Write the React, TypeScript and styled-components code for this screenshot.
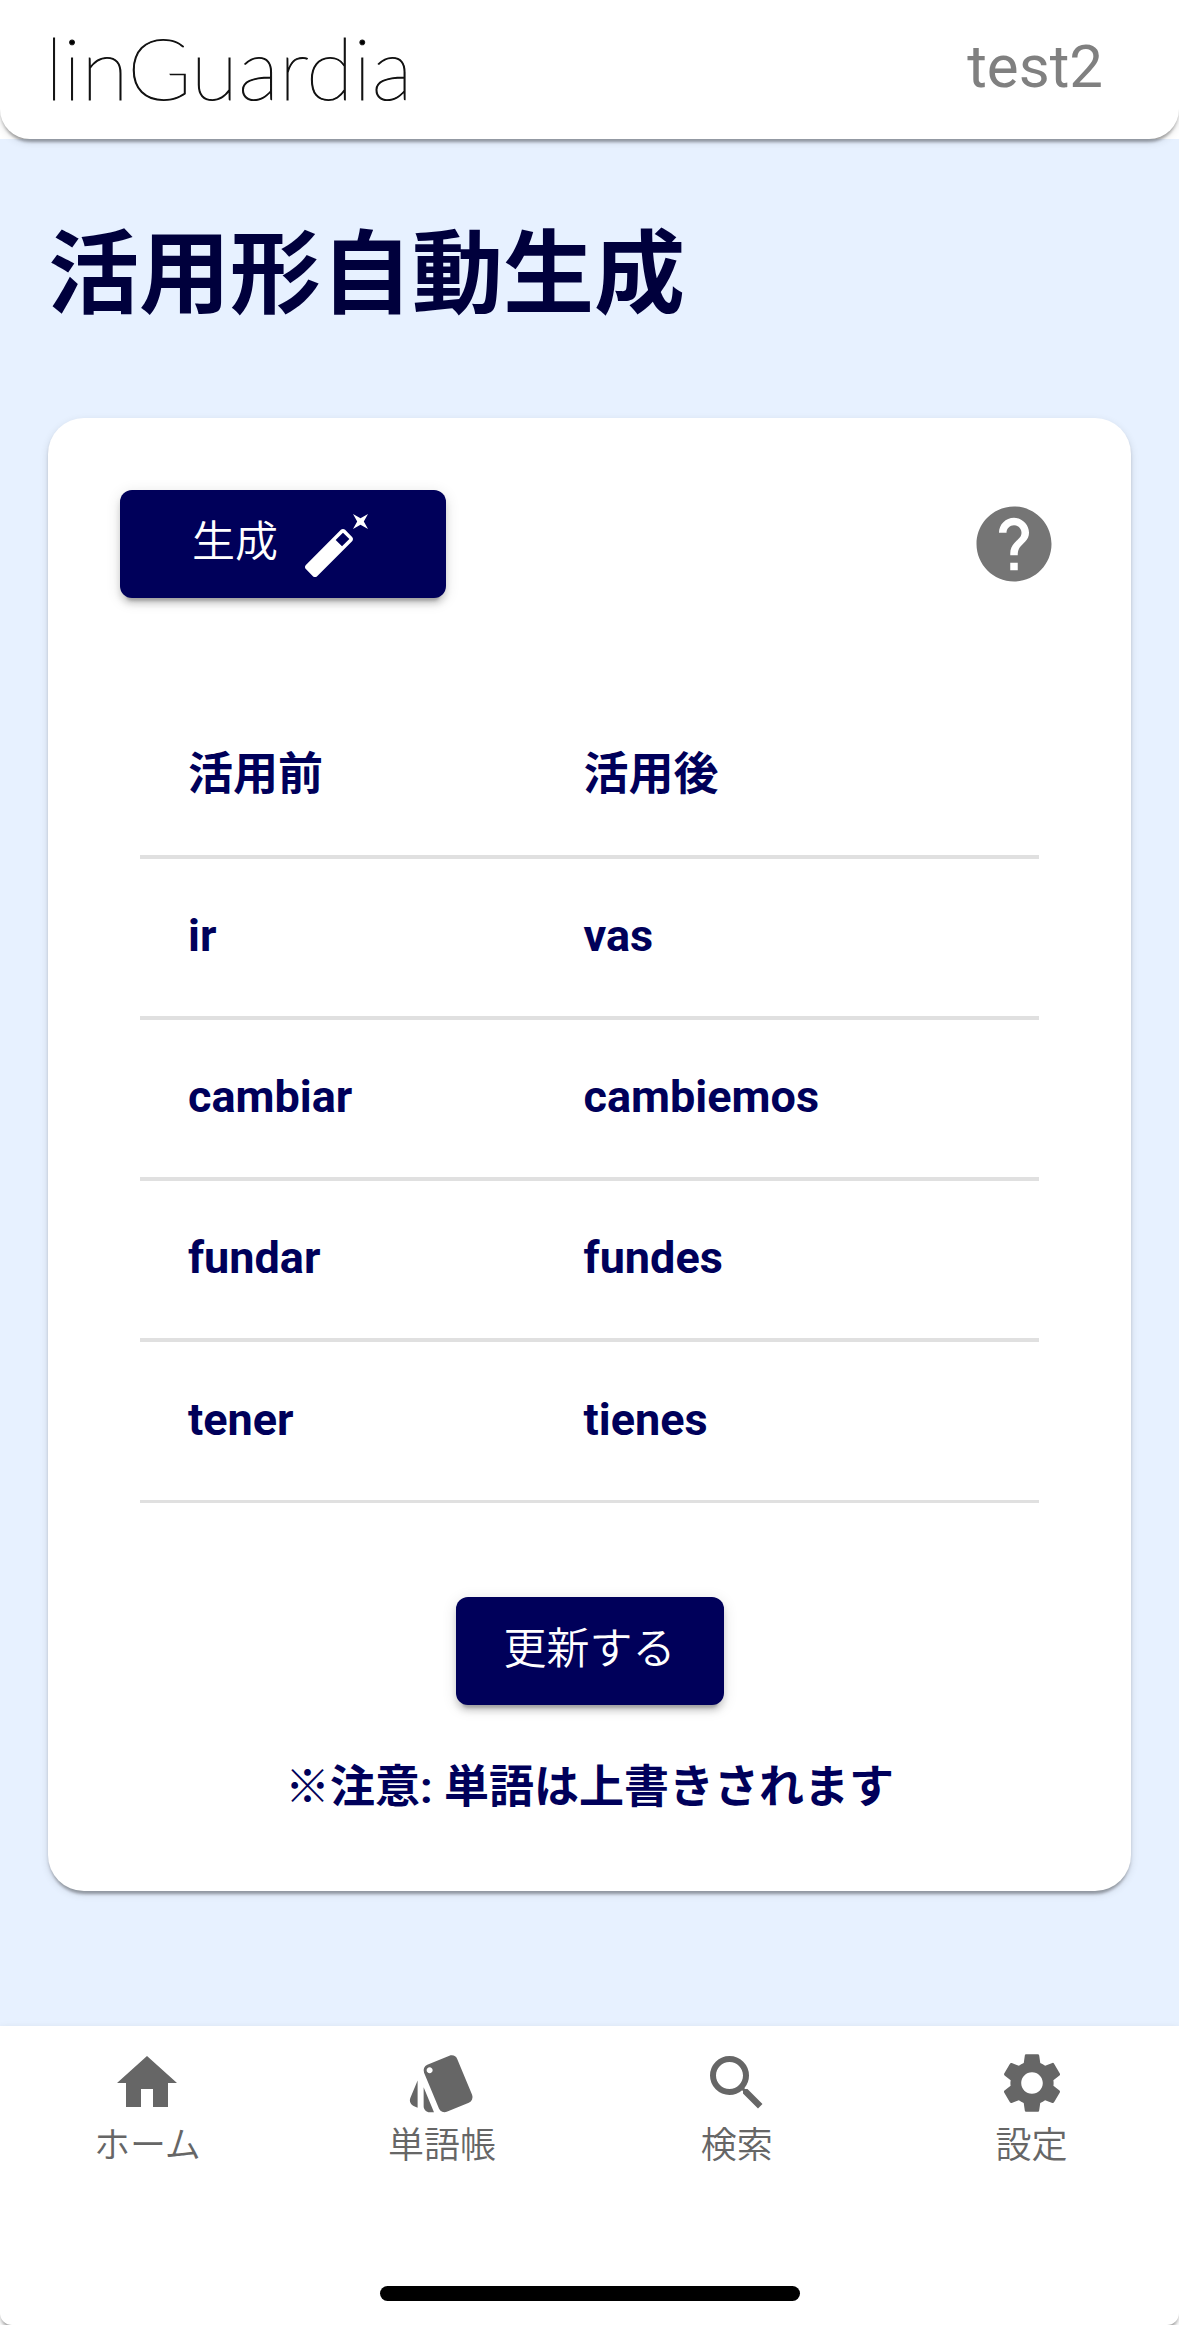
import React from "react";
import styled, { createGlobalStyle } from "styled-components";
import { MdHelp, MdHome, MdSearch, MdSettings, MdStyle } from "react-icons/md";
import type { IconType } from "react-icons";

const navy = "#00005a";

const GlobalStyle = createGlobalStyle`
  *, *::before, *::after { box-sizing: border-box; }
  body {
    margin: 0;
    background: #fff;
    color: ${navy};
    font-family: Roboto, "Noto Sans CJK JP", sans-serif;
  }
`;

const Page = styled.div`
  display: flex;
  flex-direction: column;
  min-height: 100vh;
`;

const Header = styled.header`
  position: relative;
  display: flex;
  align-items: center;
  justify-content: space-between;
  height: 139px;
  padding: 0 76px 6px 45px;
  background: #fff;
  border-radius: 0 0 30px 30px;
  box-shadow:
    0 6px 3px -3px rgba(0, 0, 0, 0.2),
    0 3px 3px 0 rgba(0, 0, 0, 0.14),
    0 3px 9px 0 rgba(0, 0, 0, 0.12);
`;

const Logo = styled.a`
  color: #000;
  font-family: Lato, sans-serif;
  font-size: 87px;
  font-weight: 200;
  line-height: 132px;
  text-decoration: none;
  -webkit-text-stroke: 1px #111;
`;

const UserName = styled.span`
  color: #808080;
  font-size: 60px;
  line-height: 72px;
`;

const Main = styled.main`
  flex: 1;
  padding: 72px 48px 48px;
  background: #e7f1ff;
`;

const Title = styled.h1`
  margin: 0 0 78px;
  color: #00003c;
  font-size: 91px;
  font-weight: 700;
  line-height: 129px;
`;

const Card = styled.section`
  padding: 72px 72px 70px;
  background: #fff;
  border-radius: 36px;
  box-shadow:
    0 6px 3px -3px rgba(0, 0, 0, 0.2),
    0 3px 3px 0 rgba(0, 0, 0, 0.14),
    0 3px 9px 0 rgba(0, 0, 0, 0.12);
`;

const Toolbar = styled.div`
  display: flex;
  align-items: center;
  justify-content: space-between;
`;

const Button = styled.button<{ $wide?: boolean }>`
  display: inline-flex;
  align-items: center;
  gap: 24px;
  height: 108px;
  padding: 0 ${(p) => (p.$wide ? 72 : 48)}px;
  border: 0;
  border-radius: 12px;
  background: ${navy};
  color: #fff;
  font: inherit;
  font-size: 43px;
  font-weight: 350;
  cursor: pointer;
  box-shadow:
    0 9px 3px -6px rgba(0, 0, 0, 0.2),
    0 6px 6px 0 rgba(0, 0, 0, 0.14),
    0 3px 15px 0 rgba(0, 0, 0, 0.12);
`;

const ButtonText = styled.span`
  padding-bottom: 12px;
`;

const HelpButton = styled.button`
  display: flex;
  padding: 0;
  border: 0;
  background: none;
  color: #757575;
  font-size: 90px;
  cursor: pointer;
`;

const TableArea = styled.div`
  padding: 100px 20px 0;
`;

const Table = styled.table`
  width: 100%;
  border-collapse: separate;
  border-spacing: 0;
  table-layout: fixed;
`;

const cell = `
  height: 161px;
  padding: 0 48px 3px;
  border-bottom: 4px solid #e0e0e0;
  font-size: 45px;
  font-weight: 700;
  line-height: 66px;
  text-align: left;
  vertical-align: middle;
`;

const HeadCell = styled.th`
  ${cell}
  &:first-child { width: 44%; }
`;

const Cell = styled.td`
  ${cell}
  tr:last-child > & { border-bottom-width: 3px; }
`;

const Actions = styled.div`
  display: flex;
  flex-direction: column;
  align-items: center;
  gap: 50px;
  padding-top: 94px;
`;

const Note = styled.p`
  margin: 0;
  font-size: 45px;
  font-weight: 700;
  line-height: 66px;
`;

const BottomBar = styled.footer`
  position: relative;
  display: flex;
  flex-direction: column;
  align-items: center;
  gap: 92px;
  padding-bottom: 24px;
  background: #fff;
  border-radius: 0 0 12px 12px;
  box-shadow:
    0 6px 3px -3px rgba(0, 0, 0, 0.2),
    0 3px 3px 0 rgba(0, 0, 0, 0.14),
    0 3px 9px 0 rgba(0, 0, 0, 0.12);
`;

const Nav = styled.nav`
  display: grid;
  grid-template-columns: repeat(4, 1fr);
  width: 100%;
  height: 168px;
`;

const NavLink = styled.a`
  display: flex;
  flex-direction: column;
  align-items: center;
  justify-content: center;
  color: #666;
  font-size: 36px;
  font-weight: 350;
  line-height: 54px;
  text-decoration: none;

  svg { font-size: 72px; }
`;

const HomeIndicator = styled.div`
  width: 420px;
  height: 15px;
  border-radius: 8px;
  background: #000;
`;

const WandIcon = () => (
  <svg width="72" height="72" viewBox="0 0 24 24" fill="currentColor" aria-hidden="true">
    <path d="M22 2l-2.5 1.4L17 2l1.4 2.5L17 7l2.5-1.4L22 7l-1.4-2.5zm-7.63 5.29c-.39-.39-1.02-.39-1.41 0L1.29 18.96c-.39.39-.39 1.02 0 1.41l2.34 2.34c.39.39 1.02.39 1.41 0L16.7 11.05c.39-.39.39-1.02 0-1.41l-2.33-2.35zm-1.03 5.49l-2.12-2.12 2.44-2.44 2.12 2.12-2.44 2.44z" />
  </svg>
);

const verbs = [
  { before: "ir", after: "vas" },
  { before: "cambiar", after: "cambiemos" },
  { before: "fundar", after: "fundes" },
  { before: "tener", after: "tienes" },
];

const links: { label: string; href: string; Icon: IconType }[] = [
  { label: "ホーム", href: "#home", Icon: MdHome },
  { label: "単語帳", href: "#wordbook", Icon: MdStyle },
  { label: "検索", href: "#search", Icon: MdSearch },
  { label: "設定", href: "#settings", Icon: MdSettings },
];

export default function App() {
  return (
    <Page lang="ja">
      <GlobalStyle />
      <Header>
        <Logo href="#home">linGuardia</Logo>
        <UserName>test2</UserName>
      </Header>
      <Main>
        <Title>活用形自動生成</Title>
        <Card>
          <Toolbar>
            <Button type="button" $wide>
              <ButtonText>生成</ButtonText>
              <WandIcon />
            </Button>
            <HelpButton type="button" aria-label="ヘルプ">
              <MdHelp />
            </HelpButton>
          </Toolbar>
          <TableArea>
            <Table>
              <thead>
                <tr>
                  <HeadCell scope="col">活用前</HeadCell>
                  <HeadCell scope="col">活用後</HeadCell>
                </tr>
              </thead>
              <tbody>
                {verbs.map((verb) => (
                  <tr key={verb.before}>
                    <Cell>{verb.before}</Cell>
                    <Cell>{verb.after}</Cell>
                  </tr>
                ))}
              </tbody>
            </Table>
          </TableArea>
          <Actions>
            <Button type="button">
              <ButtonText>更新する</ButtonText>
            </Button>
            <Note>※注意: 単語は上書きされます</Note>
          </Actions>
        </Card>
      </Main>
      <BottomBar>
        <Nav>
          {links.map(({ label, href, Icon }) => (
            <NavLink key={label} href={href}>
              <Icon aria-hidden="true" />
              {label}
            </NavLink>
          ))}
        </Nav>
        <HomeIndicator />
      </BottomBar>
    </Page>
  );
}
